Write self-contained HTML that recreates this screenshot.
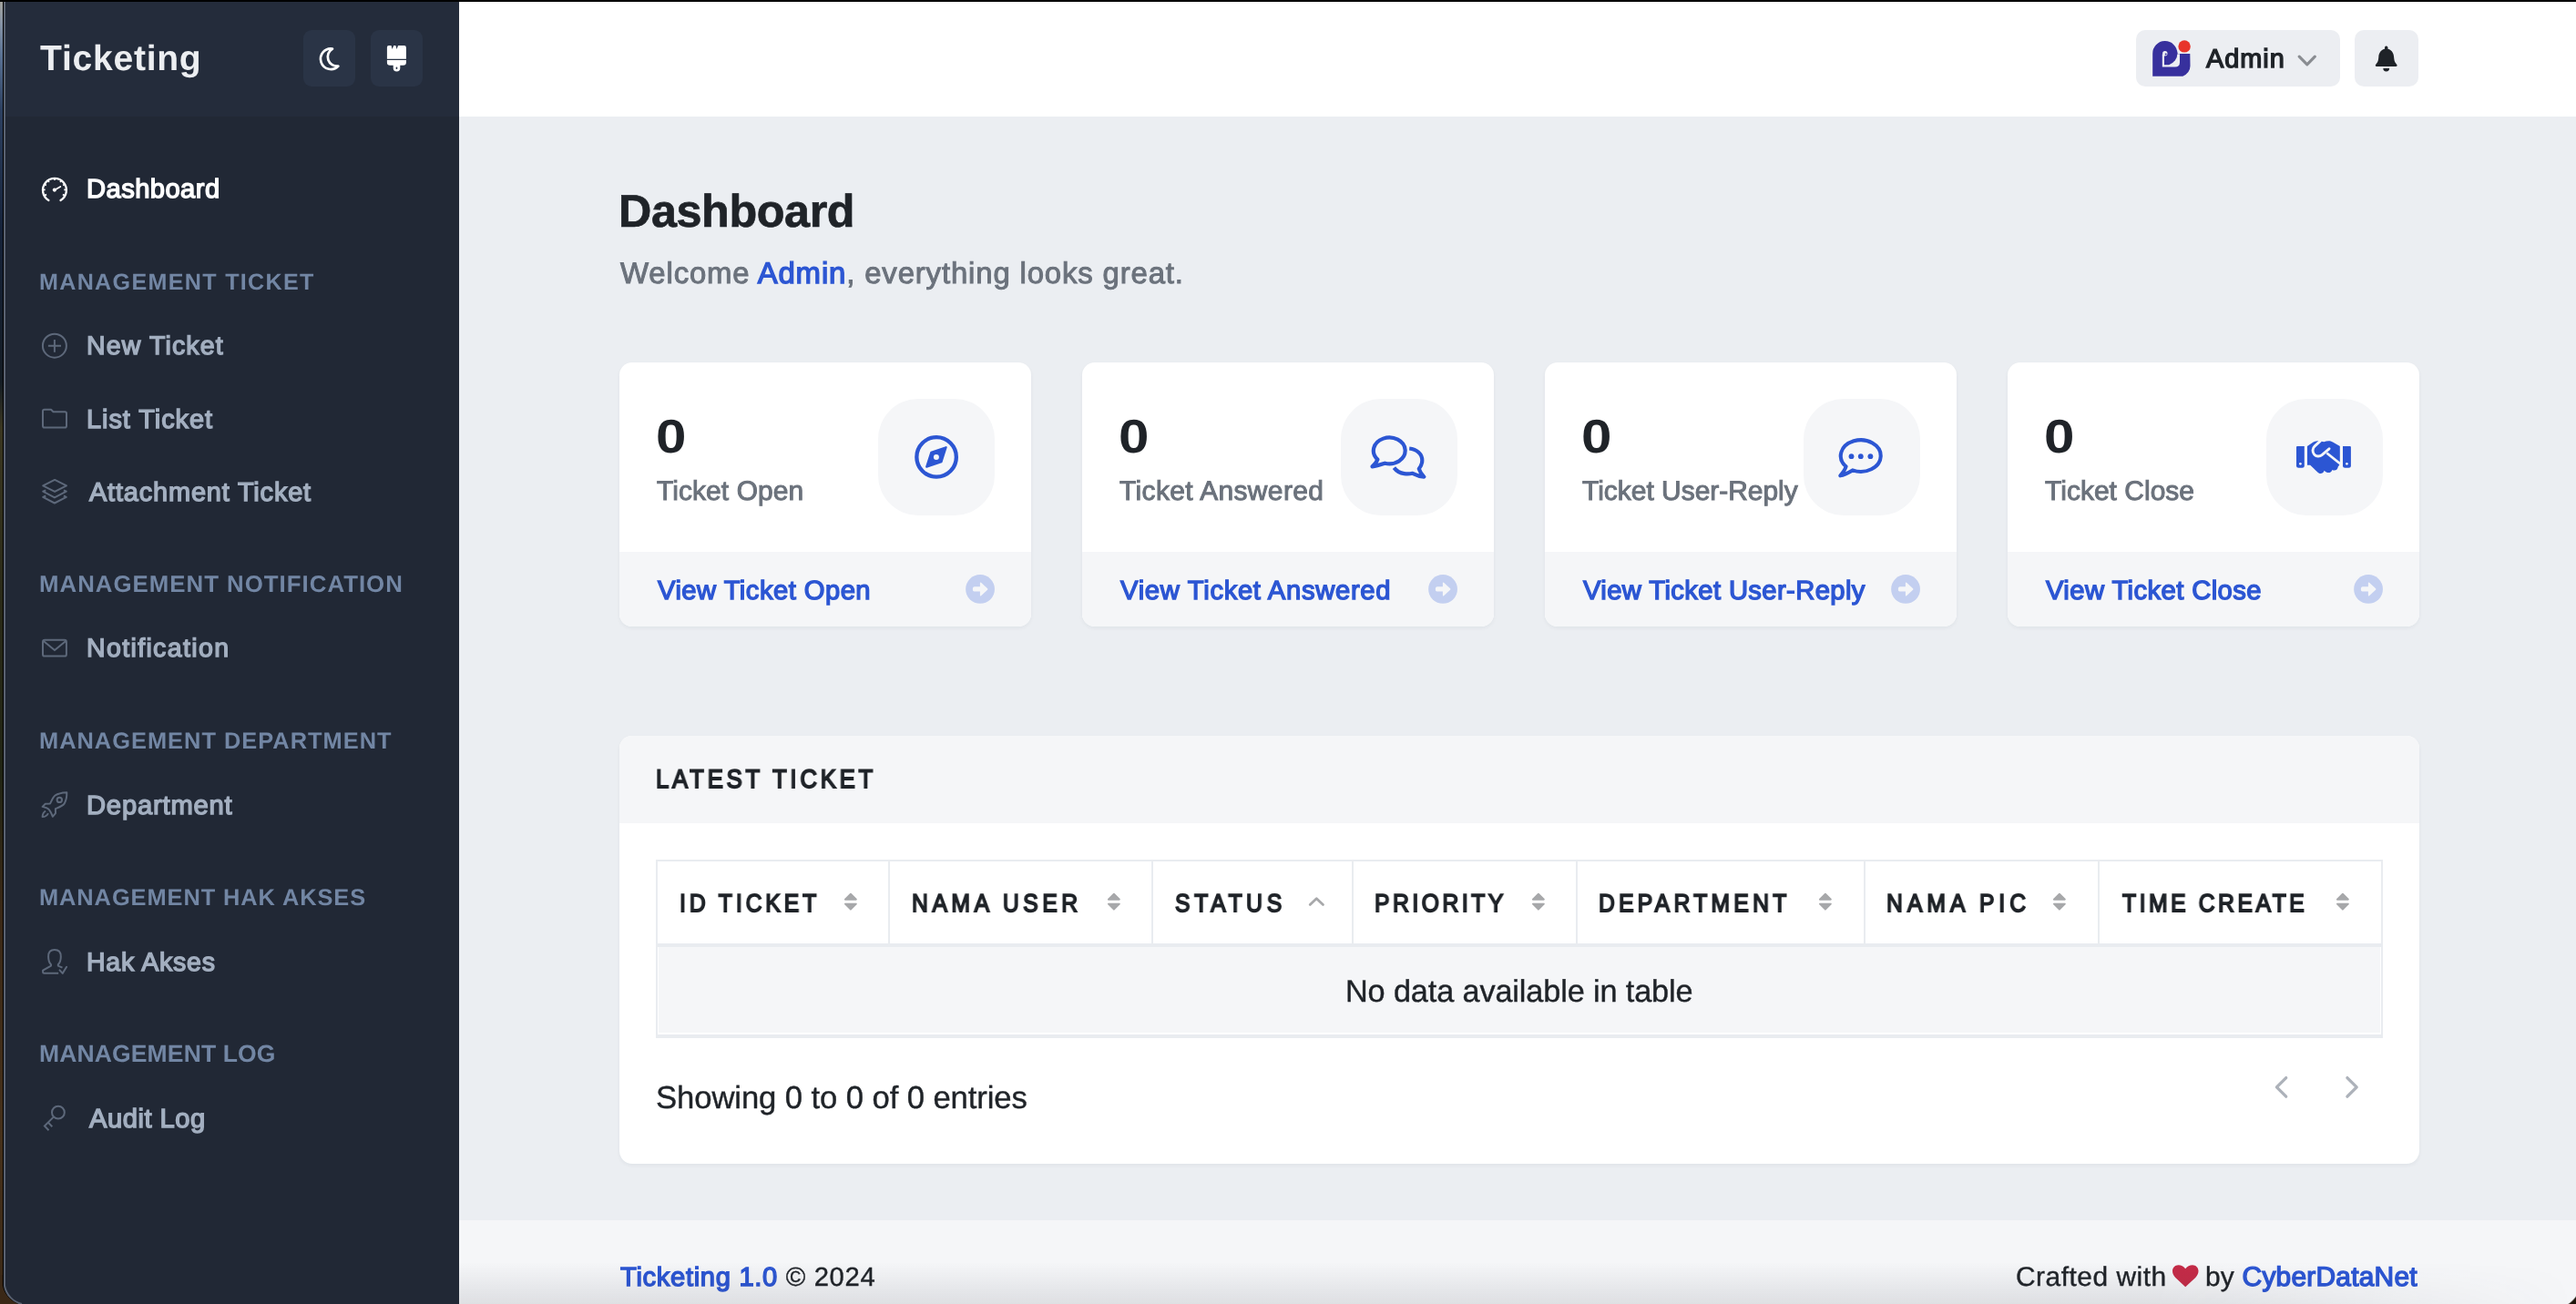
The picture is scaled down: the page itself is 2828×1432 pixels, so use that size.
<!DOCTYPE html>
<html><head><meta charset="utf-8"><title>Ticketing Dashboard</title>
<style>
html,body{margin:0;padding:0;width:2828px;height:1432px;overflow:hidden;background:#ebeef2}
body{position:relative;font-family:"Liberation Sans",sans-serif;}
.box{position:absolute}
.t{position:absolute;white-space:pre;will-change:transform;text-rendering:geometricPrecision;}
.ic{position:absolute;overflow:visible}
.card{position:absolute;background:#fff;border-radius:14px;overflow:hidden;box-shadow:0 2px 4px rgba(20,30,50,.05)}
.cfoot{position:absolute;left:0;right:0;bottom:0;height:82px;background:#f5f6f8}
.ibox{position:absolute;left:284px;top:40px;width:128px;height:128px;border-radius:44px;background:#f5f6f8}
.thead{position:absolute;left:0;right:0;top:0;height:96px;background:#f5f6f8}
</style></head>
<body>
<div class="box" style="left:0;top:0;width:2828px;height:1432px;background:#ebeef2"></div>
<div class="box" style="left:0;top:0;width:504px;height:1432px;background:#212835"></div>
<div class="box" style="left:0;top:0;width:504px;height:128px;background:#242c3b"></div>
<div class="box" style="left:504px;top:0;width:2324px;height:128px;background:#ffffff"></div>
<div class="box" style="left:504px;top:1340px;width:2324px;height:92px;background:#f5f6f8"></div>
<div class="box" style="left:333px;top:33px;width:57px;height:62px;background:#2a3446;border-radius:9px"></div>
<div class="box" style="left:407px;top:33px;width:57px;height:62px;background:#2a3446;border-radius:9px"></div>
<svg class="ic" style="left:340px;top:40px;width:45px;height:45px" viewBox="340 40 45 45"><path d="M365 53.6A11.3 11.3 0 1 0 371.4 72.6A10.2 10.2 0 0 1 365 53.6Z" fill="none" stroke="#fff" stroke-width="2.7" stroke-linejoin="round"/></svg>
<svg class="ic" style="left:415px;top:40px;width:40px;height:45px" viewBox="415 40 40 45"><path d="M426.8 50.1L429.5 50.1L430.6 54L432.2 50.1L434.4 50.1L435.6 54L437 50.1L443.8 50.1Q445.9 50.1 445.9 52.2L445.9 64.7L424.9 64.7L424.9 52.1Q424.9 50.1 426.8 50.1ZM424.9 66.1L445.9 66.1L445.9 68.5Q445.9 71.7 442.7 71.7L439.3 71.7L439.3 74.8A3.8 3.8 0 0 1 431.7 74.8L431.7 71.7L428.1 71.7Q424.9 71.7 424.9 68.5Z" fill="#fff"/><rect x="434.6" y="73.6" width="1.7" height="2.4" rx="0.8" fill="#2a3446"/></svg>
<div class="t " style="left:44.41px;top:45.00px;font-size:39.10px;line-height:39.10px;letter-spacing:0.733px;font-weight:700;color:#eceef1;">Ticketing</div>
<svg class="ic" style="left:40px;top:188px;width:40px;height:38px" viewBox="40 188 40 38"><path d="M53.4 220.0 A12.95 12.95 0 1 1 66.5 220.0" fill="none" stroke="#fff" stroke-width="2.3" stroke-linecap="round"/><path d="M59.97 195.45L59.97 198.05M67.58 197.92L66.05 200.03M52.36 197.92L53.89 200.03M71.40 202.32L69.11 203.54M48.54 202.32L50.83 203.54M72.92 208.40L70.32 208.40M47.02 208.40L49.62 208.40M71.19 214.88L68.93 213.57M48.75 214.88L51.01 213.57" stroke="#fff" stroke-width="1.8"/><path d="M59.8 208.7 L66.3 205" stroke="#fff" stroke-width="1.8" stroke-linecap="round"/><circle cx="59.9" cy="208.6" r="2.1" fill="#fff"/></svg>
<div class="t " style="left:94.99px;top:194.00px;font-size:29.20px;line-height:29.20px;letter-spacing:0.418px;font-weight:400;color:#ffffff;-webkit-text-stroke:1.4px #ffffff;">Dashboard</div>
<div class="t " style="left:43.31px;top:298.00px;font-size:25.10px;line-height:25.10px;letter-spacing:1.325px;font-weight:700;color:#7286a4;">MANAGEMENT TICKET</div>
<div class="t " style="left:43.26px;top:630.00px;font-size:25.80px;line-height:25.80px;letter-spacing:1.018px;font-weight:700;color:#7286a4;">MANAGEMENT NOTIFICATION</div>
<div class="t " style="left:43.29px;top:802.00px;font-size:25.40px;line-height:25.40px;letter-spacing:1.014px;font-weight:700;color:#7286a4;">MANAGEMENT DEPARTMENT</div>
<div class="t " style="left:43.29px;top:974.00px;font-size:25.40px;line-height:25.40px;letter-spacing:0.931px;font-weight:700;color:#7286a4;">MANAGEMENT HAK AKSES</div>
<div class="t " style="left:43.21px;top:1144.00px;font-size:26.50px;line-height:26.50px;letter-spacing:0.138px;font-weight:700;color:#7286a4;">MANAGEMENT LOG</div>
<div class="t " style="left:95.35px;top:366.00px;font-size:28.50px;line-height:28.50px;letter-spacing:1.133px;font-weight:400;color:#a3afc0;-webkit-text-stroke:1.4px #a3afc0;">New Ticket</div>
<svg class="ic" style="left:40px;top:360px;width:40px;height:40px" viewBox="40 360 40 40"><circle cx="59.9" cy="379.7" r="13" fill="none" stroke="#5d687a" stroke-width="2"/><path d="M52.9 379.7H67M59.9 372.9V386.8" stroke="#5d687a" stroke-width="2"/></svg>
<div class="t " style="left:95.32px;top:447.00px;font-size:28.90px;line-height:28.90px;letter-spacing:0.954px;font-weight:400;color:#a3afc0;-webkit-text-stroke:1.4px #a3afc0;">List Ticket</div>
<svg class="ic" style="left:40px;top:440px;width:40px;height:40px" viewBox="40 440 40 40"><path d="M47 451.6Q47 449.8 48.8 449.8L56 449.8L58.5 452.3L71.2 452.3Q73 452.3 73 454.1L73 467.8Q73 469.6 71.2 469.6L48.8 469.6Q47 469.6 47 467.8Z" fill="none" stroke="#5d687a" stroke-width="2" stroke-linejoin="round"/></svg>
<div class="t " style="left:97.63px;top:527.00px;font-size:28.90px;line-height:28.90px;letter-spacing:0.844px;font-weight:400;color:#a3afc0;-webkit-text-stroke:1.4px #a3afc0;">Attachment Ticket</div>
<svg class="ic" style="left:40px;top:520px;width:40px;height:40px" viewBox="40 520 40 40"><path d="M60.1 526.9L47.2 533.3L60.1 539.9L73 533.3ZM50.3 538.3L47.2 539.7L59.9 546.4L72.8 539.7L69.9 538.3M50.3 544.5L47.2 545.9L59.9 552.5L72.8 545.9L69.9 544.5" fill="none" stroke="#5d687a" stroke-width="2" stroke-linejoin="round"/></svg>
<div class="t " style="left:95.35px;top:698.00px;font-size:28.50px;line-height:28.50px;letter-spacing:1.364px;font-weight:400;color:#a3afc0;-webkit-text-stroke:1.4px #a3afc0;">Notification</div>
<svg class="ic" style="left:40px;top:692px;width:40px;height:40px" viewBox="40 692 40 40"><path d="M47 705Q47 702.8 49.2 702.8L70.7 702.8Q72.9 702.8 72.9 705L72.9 718.4Q72.9 720.6 70.7 720.6L49.2 720.6Q47 720.6 47 718.4Z M48.1 704.3L60 714.1L71.9 704.3" fill="none" stroke="#5d687a" stroke-width="2" stroke-linejoin="round"/></svg>
<div class="t " style="left:95.29px;top:871.00px;font-size:29.20px;line-height:29.20px;letter-spacing:0.795px;font-weight:400;color:#a3afc0;-webkit-text-stroke:1.4px #a3afc0;">Department</div>
<svg class="ic" style="left:40px;top:864px;width:40px;height:40px" viewBox="40 864 40 40"><path d="M46.6 885.9L49.8 882.7L55 882.6C56.5 880 57.5 876.5 59.6 874.4C61.5 872.3 63.9 871.7 69.1 870.6L73.3 870.3C73.4 874 73.2 878 70.7 882.4C68.8 885.2 65 886.5 60.9 888.2L61 893.1L57.8 896.8C56.5 893 55 890 52.9 888.2C51.5 887 49 886.5 46.6 885.9Z" fill="none" stroke="#5d687a" stroke-width="2" stroke-linejoin="round"/><circle cx="65.3" cy="878.4" r="2.7" fill="none" stroke="#5d687a" stroke-width="2"/><path d="M50.1 890.7C48 891.8 46.8 894 46.6 897C49 897 51.5 896 52.9 893.1" fill="none" stroke="#5d687a" stroke-width="2" stroke-linejoin="round"/></svg>
<div class="t " style="left:95.35px;top:1043.00px;font-size:28.50px;line-height:28.50px;letter-spacing:0.786px;font-weight:400;color:#a3afc0;-webkit-text-stroke:1.4px #a3afc0;">Hak Akses</div>
<svg class="ic" style="left:40px;top:1036px;width:40px;height:40px" viewBox="40 1036 40 40"><path d="M64.2 1068.8L48.6 1068.8Q47.1 1068.8 47.1 1067.3L47.1 1065.6L56 1060.6L56 1059.3C54.2 1057.5 53.1 1054.5 53.1 1050.5C53.1 1046 55.5 1043.1 59.9 1043.1C64.3 1043.1 66.8 1046 66.8 1050.5C66.8 1054.5 65.6 1057.5 63.8 1059.3L63.8 1060.6L68.5 1062.7" fill="none" stroke="#5d687a" stroke-width="2" stroke-linejoin="round"/><path d="M65.5 1065.4L68.7 1068.9L73.1 1061.8" fill="none" stroke="#5d687a" stroke-width="2" stroke-linecap="round" stroke-linejoin="round"/></svg>
<div class="t " style="left:97.63px;top:1215.00px;font-size:29.20px;line-height:29.20px;letter-spacing:0.491px;font-weight:400;color:#a3afc0;-webkit-text-stroke:1.4px #a3afc0;">Audit Log</div>
<svg class="ic" style="left:40px;top:1208px;width:40px;height:40px" viewBox="40 1208 40 40"><circle cx="63.9" cy="1221.7" r="6.9" fill="none" stroke="#5d687a" stroke-width="2"/><path d="M58.8 1226.6L48.9 1236.5L53.5 1241.3M52.9 1232.6L57.3 1237.2" fill="none" stroke="#5d687a" stroke-width="2"/></svg>
<div class="box" style="left:2345px;top:33px;width:224px;height:62px;background:#eceef2;border-radius:10px"></div>
<div class="box" style="left:2585px;top:33px;width:70px;height:62px;background:#eceef2;border-radius:10px"></div>
<svg class="ic" style="left:2358px;top:40px;width:52px;height:48px" viewBox="2358 40 52 48"><path d="M2363.2 83.8L2363.2 59A13.6 13.6 0 0 1 2390.4 58.4L2390.4 59.5L2393 59.5L2393 59.1L2404.3 59.1L2404.5 72.5Q2404.3 80 2396.3 83.8Z" fill="#37309d"/><path d="M2373.8 59.6L2393 59.6L2393 68.3Q2393 73.5 2387.8 73.5L2373.8 73.5Z" fill="#eceef2"/><path d="M2376 57.5L2390.4 57.5L2390.4 58.4A13.6 13.6 0 0 1 2381.1 71.3L2376 71.3Z" fill="#37309d"/><circle cx="2376.8" cy="58.8" r="2.7" fill="#eceef2"/><circle cx="2377.7" cy="59.4" r="1.0" fill="#37309d"/><circle cx="2398.1" cy="50.9" r="6.7" fill="#e8342a"/></svg>
<div class="t " style="left:2421.93px;top:51.00px;font-size:28.90px;line-height:28.90px;letter-spacing:0.980px;font-weight:400;color:#1f2328;-webkit-text-stroke:1.4px #1f2328;">Admin</div>
<svg class="ic" style="left:2515px;top:55px;width:35px;height:25px" viewBox="2515 55 35 25"><path d="M2524.2 62.2L2532.8 70.8L2541.3 62.2" fill="none" stroke="#8a8d92" stroke-width="3.1" stroke-linecap="round" stroke-linejoin="round"/></svg>
<svg class="ic" style="left:2600px;top:44px;width:40px;height:40px" viewBox="2600 44 40 40"><path d="M2619.7 53.6C2614.6 53.9 2611.4 57.8 2611.3 62.8L2611.1 64.6C2610.9 67.4 2609.6 69.4 2608.1 71C2607.3 71.9 2607.9 72.9 2609 72.9L2630.4 72.9C2631.5 72.9 2632.1 71.9 2631.3 71C2629.8 69.4 2628.5 67.4 2628.3 64.6L2628.1 62.8C2628 57.8 2624.8 53.9 2619.7 53.6Z" fill="#1f2328"/><rect x="2618" y="50.6" width="3.4" height="4.6" rx="1.6" fill="#1f2328"/><path d="M2616.3 75.1L2623.1 75.1A3.4 3.4 0 0 1 2616.3 75.1Z" fill="#1f2328"/></svg>
<div class="t " style="left:678.75px;top:207.00px;font-size:50.30px;line-height:50.30px;letter-spacing:-0.391px;font-weight:700;color:#1f2328;-webkit-text-stroke:0.7px #1f2328;">Dashboard</div>
<div class="t " style="left:680.84px;top:284.00px;font-size:32.90px;line-height:32.90px;letter-spacing:0.859px;"><span style="font-weight:400;color:#6b727c;-webkit-text-stroke:1.0px #6b727c;">Welcome </span><span style="font-weight:400;color:#2c56d3;-webkit-text-stroke:1.4px #2c56d3;">Admin</span><span style="font-weight:400;color:#6b727c;-webkit-text-stroke:1.0px #6b727c;">, everything looks great.</span></div>
<div class="card" style="left:680px;top:398px;width:452px;height:290px"><div class="cfoot"></div><div class="ibox"></div></div>
<div class="t " style="left:720.13px;top:454.00px;font-size:51.80px;line-height:51.80px;letter-spacing:0.000px;font-weight:700;color:#1f2328;transform:scaleX(1.16);transform-origin:0 0;">0</div>
<div class="t " style="left:721.23px;top:525.00px;font-size:29.90px;line-height:29.90px;letter-spacing:0.110px;font-weight:400;color:#6b727c;-webkit-text-stroke:1.0px #6b727c;">Ticket Open</div>
<div class="t " style="left:721.95px;top:635.00px;font-size:29.20px;line-height:29.20px;letter-spacing:0.467px;font-weight:400;color:#2c56d3;-webkit-text-stroke:1.4px #2c56d3;">View Ticket Open</div>
<svg class="ic" style="left:1056px;top:627px;width:42px;height:42px" viewBox="1056 627 42 42"><circle cx="1076.05" cy="646.95" r="15.9" fill="#c3cff0"/><path d="M1069.6 644.2L1075.9 644.2L1075.9 640.6Q1075.9 638.6 1077.3 639.9L1084.1 646.2Q1084.8 646.95 1084.1 647.7L1077.3 654Q1075.9 655.3 1075.9 653.3L1075.9 649.6L1069.6 649.6Q1067.8 649.6 1067.8 646.9Q1067.8 644.2 1069.6 644.2Z" fill="#f5f6f8"/></svg>
<svg class="ic" style="left:1000px;top:474px;width:56px;height:56px" viewBox="1000 474 56 56"><circle cx="1028.1" cy="501.9" r="21.75" fill="none" stroke="#2c56d3" stroke-width="4.3"/><path d="M1038.6 491.2L1033.5 507.1L1017.2 512.6L1022.3 496.8Z" fill="#2c56d3" stroke="#2c56d3" stroke-width="2.2" stroke-linejoin="round"/><circle cx="1027.9" cy="501.9" r="3.0" fill="#f5f6f8"/></svg>
<div class="card" style="left:1188px;top:398px;width:452px;height:290px"><div class="cfoot"></div><div class="ibox"></div></div>
<div class="t " style="left:1228.13px;top:454.00px;font-size:51.80px;line-height:51.80px;letter-spacing:0.000px;font-weight:700;color:#1f2328;transform:scaleX(1.16);transform-origin:0 0;">0</div>
<div class="t " style="left:1229.23px;top:525.00px;font-size:29.90px;line-height:29.90px;letter-spacing:0.410px;font-weight:400;color:#6b727c;-webkit-text-stroke:1.0px #6b727c;">Ticket Answered</div>
<div class="t " style="left:1229.95px;top:635.00px;font-size:29.20px;line-height:29.20px;letter-spacing:0.690px;font-weight:400;color:#2c56d3;-webkit-text-stroke:1.4px #2c56d3;">View Ticket Answered</div>
<svg class="ic" style="left:1564px;top:627px;width:42px;height:42px" viewBox="1564 627 42 42"><circle cx="1584.05" cy="646.95" r="15.9" fill="#c3cff0"/><path d="M1577.6 644.2L1583.9 644.2L1583.9 640.6Q1583.9 638.6 1585.3 639.9L1592.1 646.2Q1592.8 646.95 1592.1 647.7L1585.3 654Q1583.9 655.3 1583.9 653.3L1583.9 649.6L1577.6 649.6Q1575.8 649.6 1575.8 646.9Q1575.8 644.2 1577.6 644.2Z" fill="#f5f6f8"/></svg>
<svg class="ic" style="left:1498px;top:470px;width:72px;height:64px" viewBox="1498 470 72 64"><path d="M1512.4 504.6A17.4 14.4 0 1 1 1520.3 508.7C1517 509.8 1512 511.6 1506.5 512.3C1509.5 509.6 1511.5 507 1512.4 504.6Z" fill="none" stroke="#2c56d3" stroke-width="4.2" stroke-linejoin="round"/><path d="M1547.2 492.5C1555.5 493.2 1561.3 498.8 1561.3 505.5C1561.3 509.5 1559.8 512.3 1557.8 514.8C1558.8 518 1560.6 520.8 1563.3 523.6C1558.3 523.2 1554.3 521.6 1550.8 519.8C1547.5 520.6 1544.3 520.6 1541.6 520.2C1536.8 519.5 1533 517 1530.4 513.6" fill="none" stroke="#2c56d3" stroke-width="4.2" stroke-linejoin="round"/></svg>
<div class="card" style="left:1696px;top:398px;width:452px;height:290px"><div class="cfoot"></div><div class="ibox"></div></div>
<div class="t " style="left:1736.13px;top:454.00px;font-size:51.80px;line-height:51.80px;letter-spacing:0.000px;font-weight:700;color:#1f2328;transform:scaleX(1.16);transform-origin:0 0;">0</div>
<div class="t " style="left:1737.23px;top:525.00px;font-size:29.90px;line-height:29.90px;letter-spacing:0.021px;font-weight:400;color:#6b727c;-webkit-text-stroke:1.0px #6b727c;">Ticket User-Reply</div>
<div class="t " style="left:1737.95px;top:635.00px;font-size:29.20px;line-height:29.20px;letter-spacing:0.393px;font-weight:400;color:#2c56d3;-webkit-text-stroke:1.4px #2c56d3;">View Ticket User-Reply</div>
<svg class="ic" style="left:2072px;top:627px;width:42px;height:42px" viewBox="2072 627 42 42"><circle cx="2092.05" cy="646.95" r="15.9" fill="#c3cff0"/><path d="M2085.6 644.2L2091.9 644.2L2091.9 640.6Q2091.9 638.6 2093.3 639.9L2100.1 646.2Q2100.8 646.95 2100.1 647.7L2093.3 654Q2091.9 655.3 2091.9 653.3L2091.9 649.6L2085.6 649.6Q2083.8 649.6 2083.8 646.9Q2083.8 644.2 2085.6 644.2Z" fill="#f5f6f8"/></svg>
<svg class="ic" style="left:2010px;top:470px;width:64px;height:60px" viewBox="2010 470 64 60"><path d="M2026.6 512.3A21.95 17.35 0 1 1 2033.8 516.4C2030 518.6 2025 521.3 2020.3 522.3C2023 519.3 2025.6 515.8 2026.6 512.3Z" fill="none" stroke="#2c56d3" stroke-width="4.1" stroke-linejoin="round"/><circle cx="2032.5" cy="501.2" r="2.9" fill="#2c56d3"/><circle cx="2042.8" cy="501.2" r="2.9" fill="#2c56d3"/><circle cx="2053.4" cy="501.2" r="2.9" fill="#2c56d3"/></svg>
<div class="card" style="left:2204px;top:398px;width:452px;height:290px"><div class="cfoot"></div><div class="ibox"></div></div>
<div class="t " style="left:2244.13px;top:454.00px;font-size:51.80px;line-height:51.80px;letter-spacing:0.000px;font-weight:700;color:#1f2328;transform:scaleX(1.16);transform-origin:0 0;">0</div>
<div class="t " style="left:2245.23px;top:525.00px;font-size:29.90px;line-height:29.90px;letter-spacing:0.056px;font-weight:400;color:#6b727c;-webkit-text-stroke:1.0px #6b727c;">Ticket Close</div>
<div class="t " style="left:2245.95px;top:635.00px;font-size:29.20px;line-height:29.20px;letter-spacing:0.419px;font-weight:400;color:#2c56d3;-webkit-text-stroke:1.4px #2c56d3;">View Ticket Close</div>
<svg class="ic" style="left:2580px;top:627px;width:42px;height:42px" viewBox="2580 627 42 42"><circle cx="2600.05" cy="646.95" r="15.9" fill="#c3cff0"/><path d="M2593.6 644.2L2599.9 644.2L2599.9 640.6Q2599.9 638.6 2601.3 639.9L2608.1 646.2Q2608.8 646.95 2608.1 647.7L2601.3 654Q2599.9 655.3 2599.9 653.3L2599.9 649.6L2593.6 649.6Q2591.8 649.6 2591.8 646.9Q2591.8 644.2 2593.6 644.2Z" fill="#f5f6f8"/></svg>
<svg class="ic" style="left:2516px;top:476px;width:70px;height:50px" viewBox="2516 476 70 50"><path d="M2533 490.1L2539.6 485.6C2541.5 484.5 2543.5 484.2 2545.5 484.2L2551.4 485.2C2553 484.5 2554.6 484.2 2556.3 484.2C2558 484.2 2559.6 484.7 2561 485.5L2568.8 490.1L2568.8 507.3C2568.8 509.5 2568.2 511 2566.8 512.5C2566.5 515.6 2563.6 517.6 2560.4 515.9C2559.6 519.3 2555 520.6 2551.6 516.8C2550.6 520.2 2546.6 521.2 2544.3 518.6L2536.2 510.7L2533 510.7Z" fill="#2c56d3"/><path d="M2521 491.1Q2521 490.1 2522 490.1L2529.8 490.1L2529.8 511.2Q2529.8 513.7 2527.3 513.7L2523.5 513.7Q2521 513.7 2521 511.2Z" fill="#2c56d3"/><path d="M2572 490.1L2579.9 490.1Q2580.9 490.1 2580.9 491.1L2580.9 511.2Q2580.9 513.7 2578.4 513.7L2574.5 513.7Q2572 513.7 2572 511.2Z" fill="#2c56d3"/><path d="M2547.2 484.4L2541.2 489.8C2538.6 492.2 2538.3 496.3 2540.5 498.9C2542.7 501.5 2546.5 501.8 2549.1 499.6L2557 492.8" fill="none" stroke="#f5f6f8" stroke-width="2.9" stroke-linecap="round"/><path d="M2554.4 497.5L2569.5 509.5" fill="none" stroke="#f5f6f8" stroke-width="2.8"/><circle cx="2525.4" cy="509.3" r="1.35" fill="#f5f6f8"/><circle cx="2576.4" cy="509.3" r="1.35" fill="#f5f6f8"/></svg>
<div class="card" style="left:680px;top:808px;width:1976px;height:470px"><div class="thead"></div></div>
<div class="t " style="left:719.59px;top:842.00px;font-size:28.50px;line-height:28.50px;letter-spacing:4.244px;font-weight:400;color:#1f2328;-webkit-text-stroke:1.8px #1f2328;transform:scaleX(0.9);transform-origin:0 0;">LATEST TICKET</div>
<div class="box" style="left:720px;top:944px;width:1896px;height:196px;background:#e9ecf0"></div>
<div class="box" style="left:722px;top:946px;width:1892px;height:90px;background:#ffffff"></div>
<div class="box" style="left:722px;top:1040px;width:1892px;height:96px;background:#ffffff"></div>
<div class="box" style="left:723px;top:1040px;width:1890px;height:94px;background:#f5f6f8"></div>
<div class="box" style="left:975.0px;top:946px;width:2px;height:90px;background:#e9ecf0"></div>
<div class="box" style="left:1264.1px;top:946px;width:2px;height:90px;background:#e9ecf0"></div>
<div class="box" style="left:1484.0px;top:946px;width:2px;height:90px;background:#e9ecf0"></div>
<div class="box" style="left:1730.0px;top:946px;width:2px;height:90px;background:#e9ecf0"></div>
<div class="box" style="left:2045.7px;top:946px;width:2px;height:90px;background:#e9ecf0"></div>
<div class="box" style="left:2302.8px;top:946px;width:2px;height:90px;background:#e9ecf0"></div>
<div class="t " style="left:745.53px;top:978.00px;font-size:27.40px;line-height:27.40px;letter-spacing:4.372px;font-weight:400;color:#1f2328;-webkit-text-stroke:1.8px #1f2328;transform:scaleX(0.9);transform-origin:0 0;">ID TICKET</div>
<svg class="ic" style="left:923.9px;top:976px;width:20px;height:28px" viewBox="923.9 976 20 28"><path d="M933.8 981.7L939.8 987.7L927.8 987.7ZM927.8 992.7L939.8 992.7L933.8 998.7Z" fill="#a7a8aa" stroke="#a7a8aa" stroke-width="1.9" stroke-linejoin="round"/></svg>
<div class="t " style="left:1001.18px;top:978.00px;font-size:27.40px;line-height:27.40px;letter-spacing:5.130px;font-weight:400;color:#1f2328;-webkit-text-stroke:1.8px #1f2328;transform:scaleX(0.9);transform-origin:0 0;">NAMA USER</div>
<svg class="ic" style="left:1212.7px;top:976px;width:20px;height:28px" viewBox="1212.7 976 20 28"><path d="M1222.6 981.7L1228.6 987.7L1216.6 987.7ZM1216.6 992.7L1228.6 992.7L1222.6 998.7Z" fill="#a7a8aa" stroke="#a7a8aa" stroke-width="1.9" stroke-linejoin="round"/></svg>
<div class="t " style="left:1290.00px;top:978.00px;font-size:27.40px;line-height:27.40px;letter-spacing:5.234px;font-weight:400;color:#1f2328;-webkit-text-stroke:1.8px #1f2328;transform:scaleX(0.9);transform-origin:0 0;">STATUS</div>
<svg class="ic" style="left:1432px;top:980px;width:26px;height:20px" viewBox="1432 980 26 20"><path d="M1438.2 993.4L1445.3 986.7L1452.5 993.4" fill="none" stroke="#a7a8aa" stroke-width="2.8" stroke-linecap="round" stroke-linejoin="round"/></svg>
<div class="t " style="left:1509.28px;top:978.00px;font-size:27.40px;line-height:27.40px;letter-spacing:3.938px;font-weight:400;color:#1f2328;-webkit-text-stroke:1.8px #1f2328;transform:scaleX(0.9);transform-origin:0 0;">PRIORITY</div>
<svg class="ic" style="left:1678.5px;top:976px;width:20px;height:28px" viewBox="1678.5 976 20 28"><path d="M1688.4 981.7L1694.4 987.7L1682.4 987.7ZM1682.4 992.7L1694.4 992.7L1688.4 998.7Z" fill="#a7a8aa" stroke="#a7a8aa" stroke-width="1.9" stroke-linejoin="round"/></svg>
<div class="t " style="left:1755.28px;top:978.00px;font-size:27.40px;line-height:27.40px;letter-spacing:4.778px;font-weight:400;color:#1f2328;-webkit-text-stroke:1.8px #1f2328;transform:scaleX(0.9);transform-origin:0 0;">DEPARTMENT</div>
<svg class="ic" style="left:1994.2px;top:976px;width:20px;height:28px" viewBox="1994.2 976 20 28"><path d="M2004.1 981.7L2010.1 987.7L1998.1 987.7ZM1998.1 992.7L2010.1 992.7L2004.1 998.7Z" fill="#a7a8aa" stroke="#a7a8aa" stroke-width="1.9" stroke-linejoin="round"/></svg>
<div class="t " style="left:2070.68px;top:978.00px;font-size:27.40px;line-height:27.40px;letter-spacing:5.598px;font-weight:400;color:#1f2328;-webkit-text-stroke:1.8px #1f2328;transform:scaleX(0.9);transform-origin:0 0;">NAMA PIC</div>
<svg class="ic" style="left:2251.3px;top:976px;width:20px;height:28px" viewBox="2251.3 976 20 28"><path d="M2261.2 981.7L2267.2 987.7L2255.2 987.7ZM2255.2 992.7L2267.2 992.7L2261.2 998.7Z" fill="#a7a8aa" stroke="#a7a8aa" stroke-width="1.9" stroke-linejoin="round"/></svg>
<div class="t " style="left:2330.16px;top:978.00px;font-size:27.40px;line-height:27.40px;letter-spacing:3.977px;font-weight:400;color:#1f2328;-webkit-text-stroke:1.8px #1f2328;transform:scaleX(0.9);transform-origin:0 0;">TIME CREATE</div>
<svg class="ic" style="left:2562.4px;top:976px;width:20px;height:28px" viewBox="2562.4 976 20 28"><path d="M2572.3 981.7L2578.3 987.7L2566.3 987.7ZM2566.3 992.7L2578.3 992.7L2572.3 998.7Z" fill="#a7a8aa" stroke="#a7a8aa" stroke-width="1.9" stroke-linejoin="round"/></svg>
<div class="t " style="left:1476.67px;top:1072.00px;font-size:34.30px;line-height:34.30px;letter-spacing:-0.144px;font-weight:400;color:#1f2328;-webkit-text-stroke:0.4px #1f2328;">No data available in table</div>
<div class="t " style="left:720.04px;top:1189.00px;font-size:34.70px;line-height:34.70px;letter-spacing:-0.110px;font-weight:400;color:#1f2328;-webkit-text-stroke:0.4px #1f2328;">Showing 0 to 0 of 0 entries</div>
<svg class="ic" style="left:2490px;top:1176px;width:30px;height:36px" viewBox="2490 1176 30 36"><path d="M2509.7 1183.6L2499.4 1193.9L2509.7 1204.2" fill="none" stroke="#adb2ba" stroke-width="3.3" stroke-linecap="round" stroke-linejoin="round"/></svg><svg class="ic" style="left:2568px;top:1176px;width:30px;height:36px" viewBox="2568 1176 30 36"><path d="M2576.9 1183.6L2587.2 1193.9L2576.9 1204.2" fill="none" stroke="#adb2ba" stroke-width="3.3" stroke-linecap="round" stroke-linejoin="round"/></svg>
<div class="t " style="left:680.94px;top:1389.00px;font-size:29.20px;line-height:29.20px;letter-spacing:0.661px;"><span style="font-weight:400;color:#2c56d3;-webkit-text-stroke:1.4px #2c56d3;">Ticketing 1.0</span><span style="font-weight:400;color:#1f2328;-webkit-text-stroke:0.4px #1f2328;"> © 2024</span></div>
<div class="t " style="left:2212.70px;top:1388.00px;font-size:29.90px;line-height:29.90px;letter-spacing:0.513px;font-weight:400;color:#1f2328;-webkit-text-stroke:0.4px #1f2328;">Crafted with</div>
<svg class="ic" style="left:2380px;top:1384px;width:40px;height:34px" viewBox="2380 1384 40 34"><path d="M2399.2 1413.2L2388.2 1402.9C2386.2 1401 2385 1398.5 2385 1395.8C2385 1392.2 2387.9 1389.3 2391.5 1389.3C2394.5 1389.3 2397.2 1390.8 2399.2 1393.3C2401.3 1390.8 2404 1389.3 2407 1389.3C2410.6 1389.3 2413.5 1392.2 2413.5 1395.8C2413.5 1398.5 2412.3 1401 2410.3 1402.9Z" fill="#c52b47"/></svg>
<div class="t " style="left:2421.06px;top:1388.00px;font-size:29.90px;line-height:29.90px;letter-spacing:0.240px;"><span style="font-weight:400;color:#1f2328;-webkit-text-stroke:0.4px #1f2328;">by </span><span style="font-weight:400;color:#2c56d3;-webkit-text-stroke:1.4px #2c56d3;">CyberDataNet</span></div>
<div class="box" style="left:0;top:0;width:3.5px;height:1432px;background:linear-gradient(#a4a39c 0px,#8794a6 25px,#5a7294 60px,#2c4060 120px,#15223a 250px,#141c24 420px,#3a3620 470px,#2a2a18 650px,#202414 850px,#3a2816 1000px,#45301a 1250px,#3a2816 1432px)"></div>
<div class="box" style="left:3px;top:0;width:1px;height:1412px;background:#000"></div>
<div class="box" style="left:4px;top:0;width:2px;height:1412px;background:#596170"></div>
<div class="box" style="left:0;top:0;width:2828px;height:1.5px;background:#000"></div>
<div class="box" style="left:504px;top:1386px;width:2324px;height:46px;background:linear-gradient(rgba(40,45,60,0),rgba(40,45,60,.11));-webkit-mask-image:linear-gradient(to right,#000 0%,#000 80%,transparent 100%)"></div>
<svg class="ic" style="left:0;top:1400px;width:40px;height:32px" viewBox="0 1400 40 32"><path d="M0 1400L3.5 1400L3.5 1412A27 27 0 0 0 24 1432L0 1432Z" fill="#3a2816"/><path d="M3.5 1400L3.5 1412A26.5 26.5 0 0 0 22 1432" fill="none" stroke="#000" stroke-width="1.2"/><path d="M5 1400L5 1412A25 25 0 0 0 24 1432" fill="none" stroke="#596170" stroke-width="2"/></svg>
<div class="box" style="left:2800px;top:1404px;width:28px;height:28px;background:radial-gradient(circle at 0 0,rgba(0,0,0,0) 33.5px,#1c140a 35px)"></div>
</body></html>
